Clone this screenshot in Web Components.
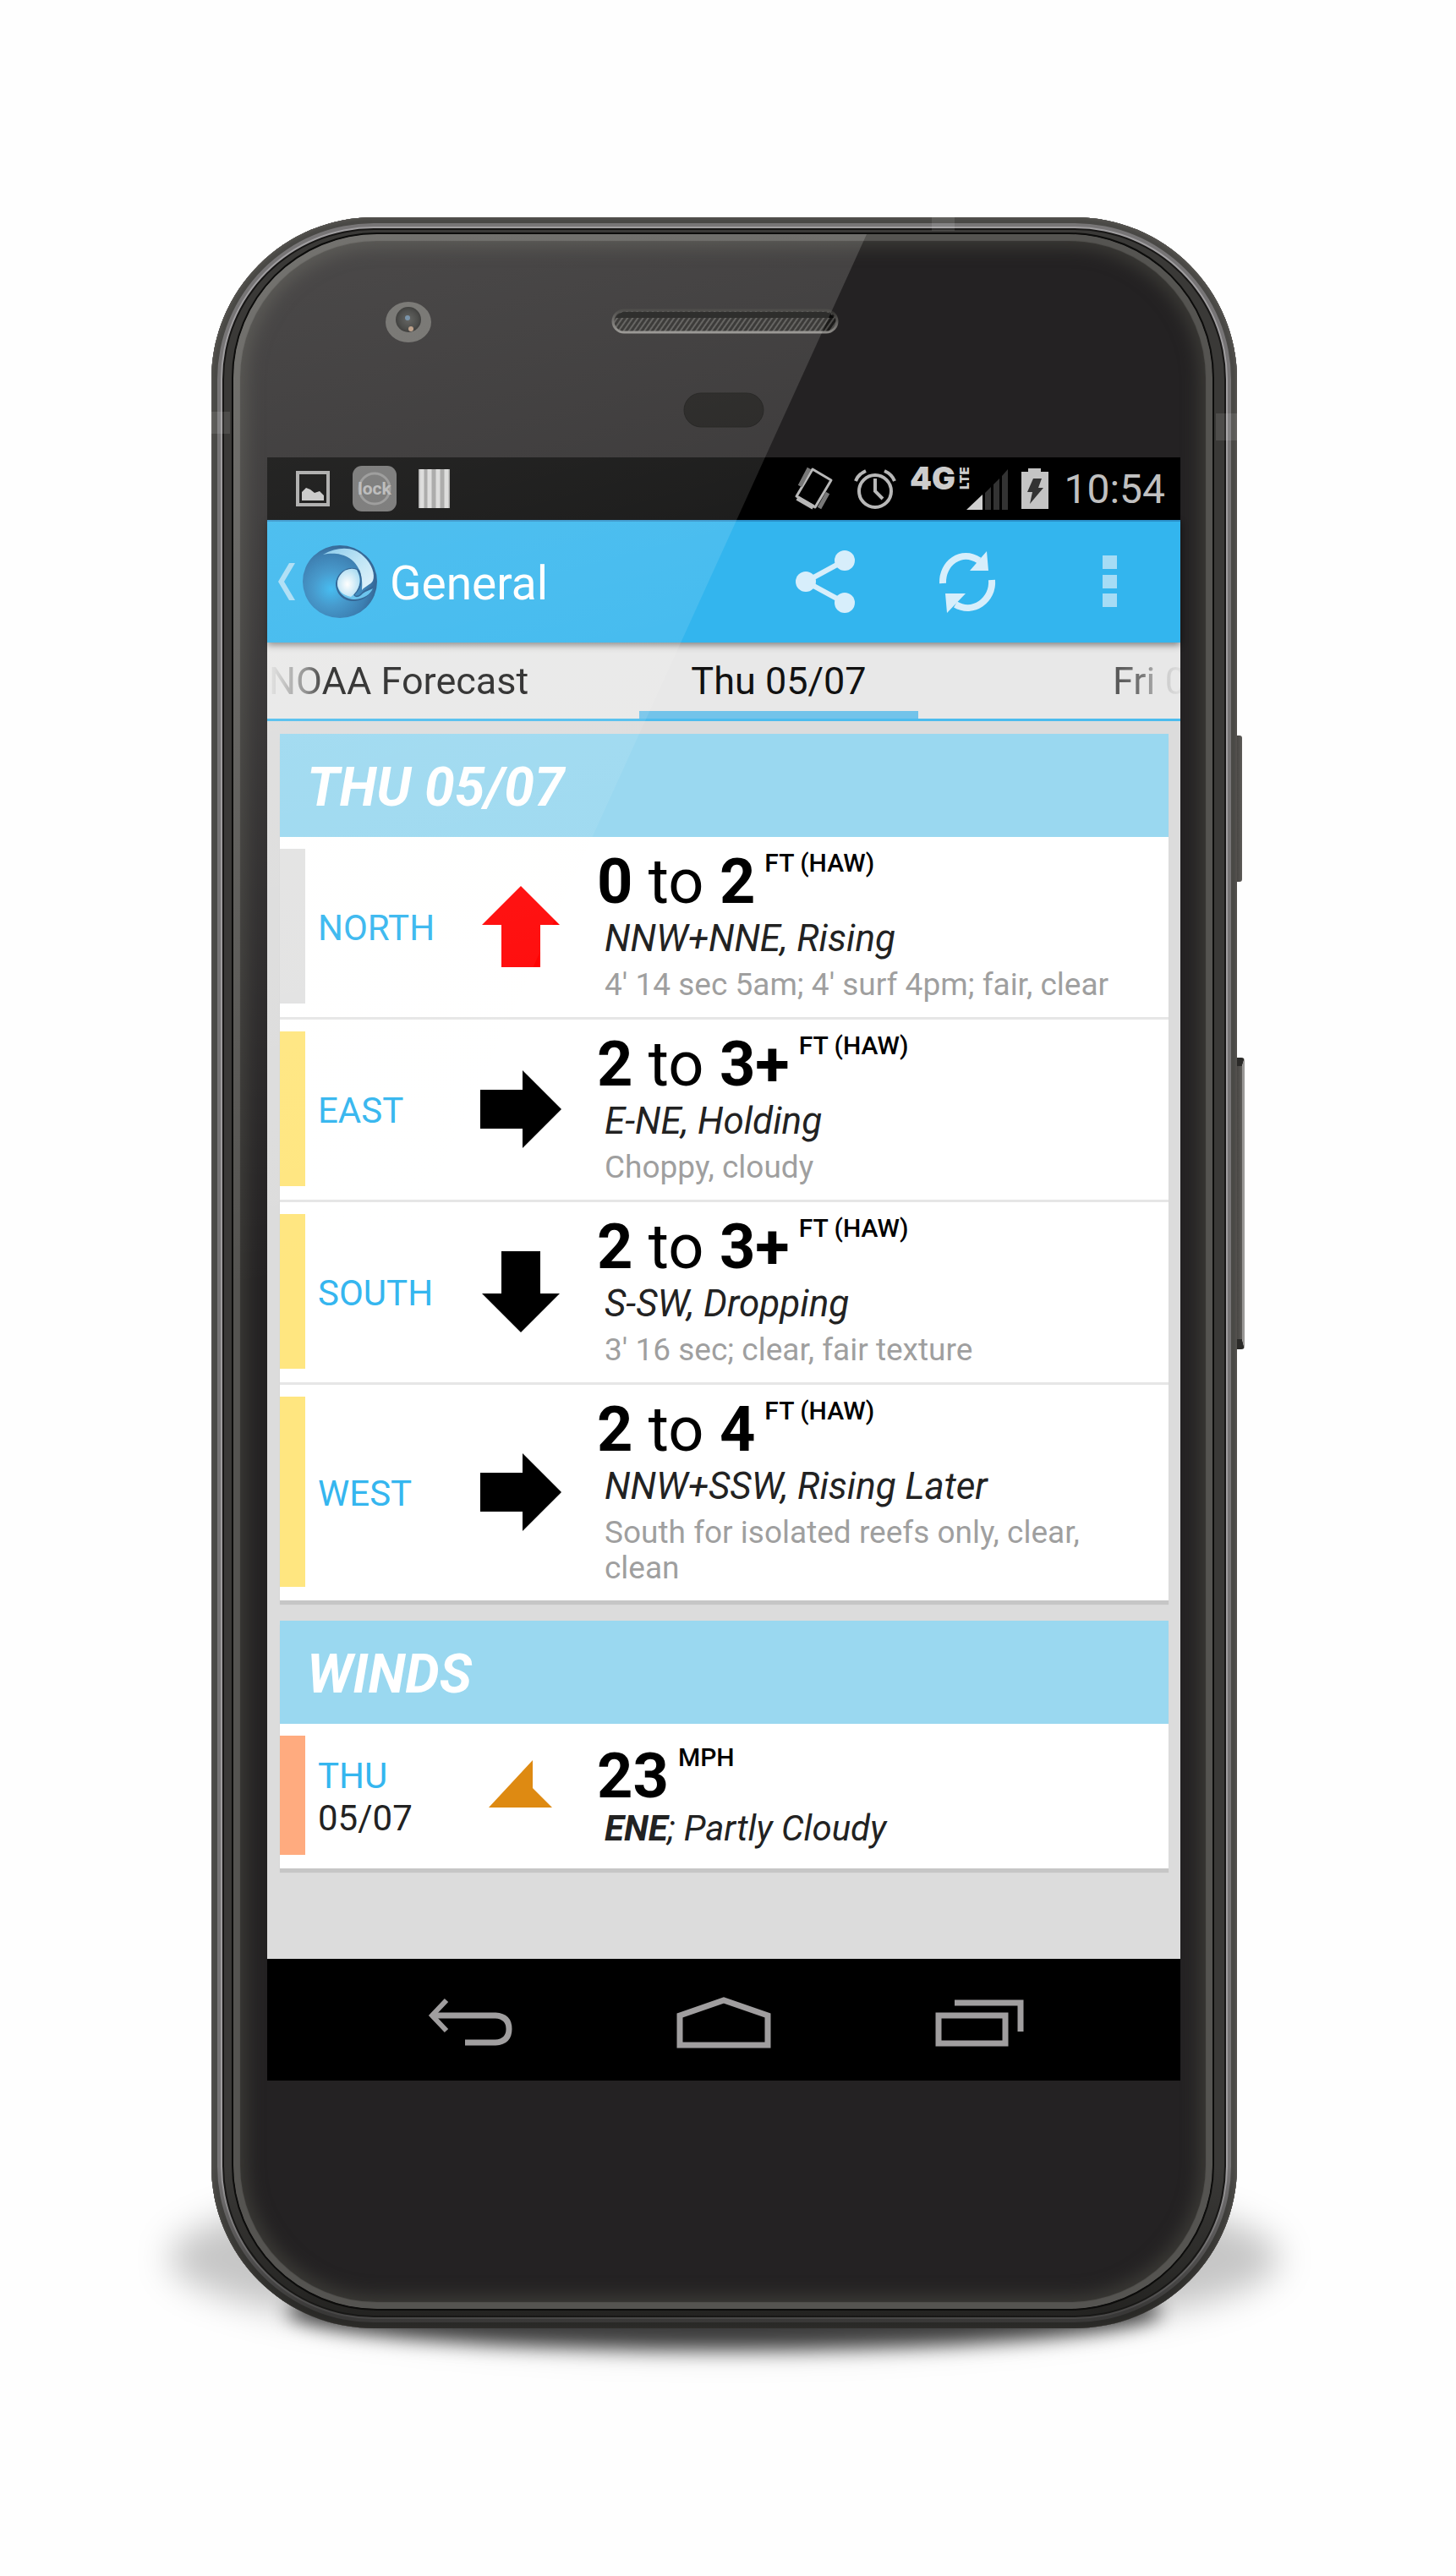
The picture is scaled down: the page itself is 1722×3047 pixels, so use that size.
<!DOCTYPE html>
<html lang="en">
<head>
<meta charset="utf-8">
<meta name="viewport" content="width=device-width, initial-scale=1">
<title>General</title>
<style>
  body { margin: 0; min-height: 100vh; background: #fefefe; font-family: Roboto, "Liberation Sans", sans-serif; }
  main { padding: 257px 259px 293px 250px; }
</style>
</head>
<body>
<main>
  <phone-frame>
    <status-bar></status-bar>
    <action-bar heading="General"></action-bar>
    <tab-strip></tab-strip>
    <forecast-list>
      <forecast-card heading="THU 05/07">
        <forecast-row level="flat" place="NORTH" trend="up">
          <span slot="value"><b>0</b> to <b>2</b></span><span slot="unit">FT (HAW)</span>
          <span slot="summary">NNW+NNE, Rising</span>
          <span slot="note">4' 14 sec 5am; 4' surf 4pm; fair, clear</span>
        </forecast-row>
        <forecast-row level="small" place="EAST" trend="right">
          <span slot="value"><b>2</b> to <b>3+</b></span><span slot="unit">FT (HAW)</span>
          <span slot="summary">E-NE, Holding</span>
          <span slot="note">Choppy, cloudy</span>
        </forecast-row>
        <forecast-row level="small" place="SOUTH" trend="down">
          <span slot="value"><b>2</b> to <b>3+</b></span><span slot="unit">FT (HAW)</span>
          <span slot="summary">S-SW, Dropping</span>
          <span slot="note">3' 16 sec; clear, fair texture</span>
        </forecast-row>
        <forecast-row level="small" place="WEST" trend="right">
          <span slot="value"><b>2</b> to <b>4</b></span><span slot="unit">FT (HAW)</span>
          <span slot="summary">NNW+SSW, Rising Later</span>
          <span slot="note">South for isolated reefs only, clear, clean</span>
        </forecast-row>
      </forecast-card>
      <forecast-card heading="WINDS">
        <forecast-row level="windy" place="THU" date="05/07" trend="wind">
          <span slot="value"><b>23</b></span><span slot="unit">MPH</span>
          <span slot="summary"><b>ENE</b>; Partly Cloudy</span>
        </forecast-row>
      </forecast-card>
    </forecast-list>
    <nav-bar></nav-bar>
  </phone-frame>
</main>

<script>
const define = (name, render) => customElements.define(name, class extends HTMLElement {
  constructor() {
    super();
    this.attachShadow({ mode: 'open' });
  }
  connectedCallback() {
    this.shadowRoot.innerHTML = render(this);
  }
});

define('phone-frame', () => `
<style>
  :host { display: block; position: relative; }
  .glow, .contact { position: absolute; border-radius: 50%; }
  .glow { left: -50px; right: -50px; bottom: -22px; height: 210px; background: rgba(0,0,0,.22); filter: blur(20px); }
  .contact { left: 90px; right: 90px; bottom: -25px; height: 90px; background: rgba(0,0,0,.7); filter: blur(11px); }
  .key { position: absolute; left: 100%; box-sizing: border-box; background: linear-gradient(90deg, #44423f, #5d5b58); }
  .power { top: 613px; width: 7px; height: 173px; border-radius: 0 3px 3px 0; margin-left: -1px; }
  .volume { top: 994px; width: 10px; height: 345px; border-radius: 0 4px 4px 0; margin-left: -1px;
    border-right: 3px solid #9a9896; border-top: 10px solid #2b2a28; border-bottom: 12px solid #2b2a28; }
  .body { position: relative; padding: 20px 29px 23px 26px; border-radius: 192px; background: #3a3937;
    box-shadow: inset 0 0 3px 2px #55534f, inset 0 0 0 7px #4a4946, inset 0 0 0 11px #777576, inset 0 0 0 13px #a09ea0, inset 0 0 0 15px #171615; }
  .body::before { content: ""; position: absolute; inset: 0; border-radius: inherit;
    background: linear-gradient(transparent calc(100% - 190px), rgba(24,24,22,.65) calc(100% - 20px)); }
  .antennas { position: absolute; inset: 0; border-radius: inherit; overflow: hidden; }
  .antenna { position: absolute; background: rgba(255,255,255,.1); }
  .antenna.top { left: 70%; top: 0; width: 27px; height: 16px; margin-left: 3px; }
  .antenna.side { left: 0; top: 230px; width: 22px; height: 26px; }
  .antenna.end { right: 0; top: 232px; width: 25px; height: 32px; }
  .glass { position: relative; overflow: hidden; border-radius: 170px; padding: 0 38px 0 40px; background: #242223;
    box-shadow: 0 0 0 2px #0c0c0b; }
  .edge { position: absolute; inset: 0; border-radius: inherit; pointer-events: none;
    box-shadow: inset 0 0 1px 8px #555451, inset 0 0 20px 16px #3b3a36; }
  .top { display: flex; justify-content: center; height: 264px; }
  .top svg { flex: none; overflow: visible; }
  .chin { height: 270px; }
  .glare { position: absolute; z-index: 2; left: 0; top: 0; width: 749px; height: 1646px; pointer-events: none;
    clip-path: polygon(0 0, 100% 0, 0 100%);
    background: linear-gradient(165deg, rgba(255,253,248,.18), rgba(255,253,248,.12) 25%, rgba(255,253,248,.08) 40%, rgba(255,253,248,0) 68%); }
</style>
<div class="glow"></div><div class="contact"></div>
<div class="key power"></div><div class="key volume"></div>
<div class="body">
<div class="antennas"><div class="antenna top"></div><div class="antenna side"></div><div class="antenna end"></div></div>
<div class="glass">
  <div class="edge"></div>
  <div class="top">
    <svg width="1080" height="264" viewBox="0 0 1080 264" aria-hidden="true">
      <defs>
        <pattern id="mesh" width="5" height="5" patternUnits="userSpaceOnUse" patternTransform="rotate(35)"><rect width="5" height="5" fill="#1b1a19"/><rect width="2" height="5" fill="#4c4b49"/></pattern>
        <radialGradient id="lens"><stop offset="0" stop-color="#484947"/><stop offset=".75" stop-color="#2b2c2a"/><stop offset="1" stop-color="#1c1c1b"/></radialGradient>
        <linearGradient id="rim" x2="0" y2="1"><stop offset="0" stop-color="#2f2e2c"/><stop offset="1" stop-color="#8a8885"/></linearGradient>
      </defs>
      <ellipse cx="167" cy="104" rx="27" ry="24" fill="#62615e"/>
      <circle cx="167" cy="101" r="15" fill="url(#lens)"/>
      <circle cx="166" cy="99" r="3" fill="#60809a"/><circle cx="170" cy="112" r="3" fill="#b49277"/>
      <rect x="409" y="90" width="265" height="26" rx="13" fill="url(#mesh)" stroke="url(#rim)" stroke-width="3"/>
      <path d="M412 99q4-7 10-7h238q6 0 10 7z" fill="#0a0a09"/>
      <rect x="493" y="188" width="94" height="40" rx="20" fill="#0f0e0d" stroke="#080807"/>
    </svg>
  </div>
  <slot></slot>
  <div class="chin"></div>
  <div class="glare"></div>
</div></div>`);

define('status-bar', () => `
<style>
  :host { display: flex; position: relative; align-items: center; justify-content: space-between; height: 74px; padding: 0 18px 0 33px; background: #000; color: #c0c0c0; }
  div { display: flex; align-items: center; }
  .left { gap: 26px; }
  .right { gap: 12px; }
  time { font-size: 48px; line-height: 56px; padding: 2px 0 0 4px; }
  svg { display: block; flex: none; overflow: visible; }
</style>
<div class="left">
  <svg width="42" height="44" viewBox="0 0 42 44"><rect x="3" y="3" width="36" height="38" fill="none" stroke="#a5a5a5" stroke-width="4"/><path d="M8 36V26l5-5 5 2 5 4 6-2 5 5v6z" fill="#c4c4c4"/></svg>
  <svg width="52" height="54" viewBox="0 0 52 54"><rect width="52" height="54" rx="11" fill="#6c6c6c"/><circle cx="26" cy="27" r="18" fill="none" stroke="#909090" stroke-width="3"/><text x="26" y="34" text-anchor="middle" font-family="Roboto,sans-serif" font-size="21" font-weight="700" fill="#b4b4b4">lock</text></svg>
  <svg width="37" height="46" viewBox="0 0 37 46"><path fill="#a0a0a0" d="M0 0h37v46H0z"/><path d="M4 0v46M13 0v46M23 0v46M33 0v46" stroke="#d8d8d8" stroke-width="5"/></svg>
</div>
<div class="right">
  <svg width="58" height="52" viewBox="0 0 58 52"><g fill="none" stroke="#b8b8b8" stroke-linejoin="round"><path stroke-width="3" d="M21 3 43 16 24 48 2 35z"/><path stroke-width="6" d="M3 37 22 48"/><path stroke="#777" stroke-width="5" d="M17 2 6 23M39 31 29 49"/></g></svg>
  <svg width="50" height="48" viewBox="0 0 50 48" fill="none" stroke="#b8b8b8" stroke-width="4"><circle cx="25" cy="27" r="19"/><path d="M25 12v15l9 9M2 15Q5 7 14 3M48 15Q45 7 36 3"/></svg>
  <svg width="122" height="52" viewBox="-5 0 122 52"><text x="-1" y="27" font-family="Inter,sans-serif" font-weight="900" font-size="37" fill="#ccc">4G</text><text transform="translate(69 27) rotate(-90)" font-family="Inter,sans-serif" font-weight="900" font-size="15" fill="#ccc">LTE</text>
    <path fill="#333" d="M88 31l7-7v27h-7zM98 21l7-7v37h-7zM108 11l7-8v48h-7z"/><path fill="#d0d0d0" d="M66 51 85 33v18z"/></svg>
  <svg width="36" height="50" viewBox="0 0 36 50"><path fill="#c4c4c4" d="M2 5h8V1h15v4h9v44H2z"/><path fill="#333" d="M16 13h10l-4 11h6L12 43l3-14H9z"/></svg>
  <time>10:54</time>
</div>`);

define('action-bar', el => `
<style>
  :host { display: flex; align-items: center; height: 145px; position: relative; z-index: 1; background: #33b5ee; box-shadow: inset 0 2px #2a8fc9, 0 3px 8px rgba(0,0,0,.45); color: #fff; }
  button { border: 0; padding: 0; background: none; display: flex; align-items: center; justify-content: center; }
  .up { gap: 9px; padding-left: 13px; }
  h1 { margin: 0 0 0 15px; padding-top: 4px; font-size: 55px; line-height: 64px; font-weight: 400; flex: 1; }
  .icon { width: 168px; height: 145px; }
  svg { display: block; }
</style>
<button class="up" aria-label="Up">
  <svg width="20" height="44" viewBox="0 0 20 44"><path d="M13 0h7L7 22l13 22h-7L0 22z" fill="#a6dcf5"/></svg>
  <svg width="88" height="86" viewBox="0 0 88 86">
    <defs>
      <radialGradient id="ball" cx=".38" cy=".6" r=".6"><stop offset="0" stop-color="#2db4f0"/><stop offset=".4" stop-color="#2e8cc6"/><stop offset=".8" stop-color="#226ea8"/><stop offset="1" stop-color="#1a548a"/></radialGradient>
      <radialGradient id="eye" cx=".45" cy=".55" r=".6"><stop offset="0" stop-color="#fff"/><stop offset="1" stop-color="#a4d9f2"/></radialGradient>
      <linearGradient id="wave" x2="1" y2="1"><stop offset="0" stop-color="#7cc5ea"/><stop offset=".5" stop-color="#b5e1f5"/><stop offset="1" stop-color="#dff2fb"/></linearGradient>
    </defs>
    <ellipse cx="44" cy="43" rx="44" ry="43" fill="url(#ball)"/>
    <path d="M24 11C42 1 60 1 72 13 82 22 86 35 83 42 80 47 74 48 70 53 72 36 66 16 45 11 37 9 30 10 24 11z" fill="url(#wave)"/>
    <path d="M67 29C54 22 40 32 39 45 39 59 50 67 62 66 74 65 82 57 85 46 80 51 74 51 69 57 65 61 61 60 62 58 71 50 71 38 67 29z" fill="#1a548a"/>
    <path d="M64 30C53 25 42 34 41 45 41 57 51 64 62 64 73 63 80 58 83 51 78 54 74 54 69 59 64 63 60 61 60 57 69 50 70 38 64 30z" fill="#58bdec"/>
    <path d="M64 29C53 24 41 34 41 45 41 53 47 59 57 61 68 53 70 40 64 29z" fill="url(#eye)"/>
  </svg>
</button>
<h1>${el.getAttribute('heading')}</h1>
<button class="icon" aria-label="Share"><svg width="72" height="74" viewBox="0 0 72 74" fill="#d7eefb"><path d="M59 12 13 37 59 62" fill="none" stroke="#d7eefb" stroke-width="6"/><circle cx="59" cy="12" r="12"/><circle cx="13" cy="37" r="12"/><circle cx="59" cy="62" r="12"/></svg></button>
<button class="icon" aria-label="Refresh"><svg width="68" height="74" viewBox="0 0 68 74"><path d="M5 39C4 15 27-2 48 12M63 35C65 59 41 76 20 64" fill="none" stroke="#d7eefb" stroke-width="8"/><path d="M57 1 59 24H37zM10 74 8 51H32z" fill="#d7eefb"/></svg></button>
<button class="icon" aria-label="More options"><svg width="17" height="62" viewBox="0 0 17 62" fill="#a6dcf5"><path d="M0 0h17v16H0zM0 23h17v16H0zM0 45h17v16H0z"/></svg></button>`);

define('tab-strip', () => `
<style>
  :host { display: block; position: relative; background: #e8e8e8; }
  nav { display: grid; grid-template-columns: 440fr 330fr 310fr; border-bottom: 3px solid #4cbcee; overflow: hidden; }
  a { color: #111; text-decoration: none; font-size: 45px; line-height: 90px; height: 90px; white-space: nowrap; box-sizing: border-box; padding-top: 1px; }
  .prev { padding-left: 2px; color: transparent; background: linear-gradient(90deg, #d8d8d8 8px, #888 45px, #222 68px); background-clip: text; -webkit-background-clip: text; }
  .current { text-align: center; border-bottom: 9px solid #72c3ea; }
  .next { display: flex; justify-content: flex-end; margin-right: -7px; color: transparent; background: linear-gradient(270deg, #dcdcdc 10px, #c4c4c4 32px, #777 52px, #555 85px); background-clip: text; -webkit-background-clip: text; }
</style>
<nav>
  <a class="prev" href="#noaa">NOAA Forecast</a>
  <a class="current" href="#thu" aria-current="page">Thu 05/07</a>
  <a class="next" href="#fri">Fri 0</a>
</nav>`);

define('forecast-list', () => `
<style>
  :host { display: flex; position: relative; flex-direction: column; gap: 24px; box-sizing: border-box; min-height: 1464px; padding: 15px 14px 0 15px; background: #dcdcdc; }
</style>
<slot></slot>`);

define('forecast-card', el => `
<style>
  :host { display: block; background: #fff; box-shadow: 0 5px 1px #c6c6c6; }
  h2 { margin: 0; box-sizing: border-box; height: 122px; line-height: 120px; padding: 4px 0 0 32px; background: #9ad8f0; color: #fff; font-size: 64px; font-weight: 700; font-style: italic; }
  ::slotted(forecast-row:not(:last-child)) { border-bottom: 3px solid #e6e6e6; }
  ::slotted(forecast-row) { padding: 14px 0 16px; }
</style>
<h2>${el.getAttribute('heading')}</h2>
<slot></slot>`);

const LEVELS = { flat: '#e2e2e2', small: '#ffe680', windy: '#ffab7f' };
const TURNS = { up: -90, right: 0, down: 90 };
const arrow = trend => trend === 'wind'
  ? `<svg width="96" height="96" viewBox="0 0 96 96"><path d="M62 6V39L85 62H10z" fill="#de8a12"/></svg>`
  : `<svg width="96" height="96" viewBox="0 0 96 96"><path transform="rotate(${TURNS[trend]} 48 48)" d="M0 25h50V2l46 46-46 46V71H0z" fill="${trend === 'up' ? '#ff0404' : '#000'}"/></svg>`;

define('forecast-row', el => {
  const date = el.getAttribute('date');
  return `
<style>
  :host { display: grid; grid-template-columns: 30px 207px 96px 1fr; }
  .bar { background: ${LEVELS[el.getAttribute('level')]}; }
  .place { align-self: center; padding: 4px 0 0 15px; font-size: 42px; line-height: 50px; color: #35b6ef; }
  .date { display: block; color: #222; }
  svg { display: block; align-self: center; }
  .text { padding: ${date ? '9px 40px 8px 42px' : '0 40px 1px 42px'}; color: #000; }
  .value { display: flex; gap: 11px; font-size: 74px; line-height: 78px; }
  .unit { font-size: 30px; line-height: 34px; font-weight: 500; }
  .summary { padding-left: 9px; font-size: ${date ? 42 : 44}px; line-height: ${date ? 46 : 56}px; font-style: italic; color: #222; }
  .note { margin-top: 6px; padding-left: 9px; font-size: 37px; line-height: 42px; color: #9f9f9f; }
</style>
<div class="bar"></div>
<div class="place">${el.getAttribute('place')}${date ? `<span class="date">${date}</span>` : ''}</div>
${arrow(el.getAttribute('trend'))}
<div class="text">
  <div class="value"><slot name="value"></slot><span class="unit"><slot name="unit"></slot></span></div>
  <div class="summary"><slot name="summary"></slot></div>
  ${date ? '' : '<div class="note"><slot name="note"></slot></div>'}
</div>`;
});

define('nav-bar', () => `
<style>
  :host { display: grid; position: relative; grid-template-columns: repeat(3, 1fr); height: 144px; padding: 0 90px; background: #000; box-sizing: border-box; }
  button { border: 0; padding: 8px 0 0; background: none; display: flex; align-items: center; justify-content: center; }
  svg { display: block; fill: none; stroke: #a09e9f; stroke-width: 7; overflow: visible; }
</style>
<button aria-label="Back"><svg width="100" height="56" viewBox="0 0 100 56"><path d="M22 1 5 19 22 37" stroke-width="6"/><path d="M5 19H80Q96 20 96 35T80 51H44"/></svg></button>
<button aria-label="Home"><svg width="110" height="60" viewBox="0 0 110 60"><path d="M3 21 55 3 107 21V56H3z"/></svg></button>
<button aria-label="Recent apps"><svg width="100" height="56" viewBox="0 0 100 56"><path d="M4 19H83V52H4zM23 4H101V38"/></svg></button>`);
</script>
</body>
</html>
